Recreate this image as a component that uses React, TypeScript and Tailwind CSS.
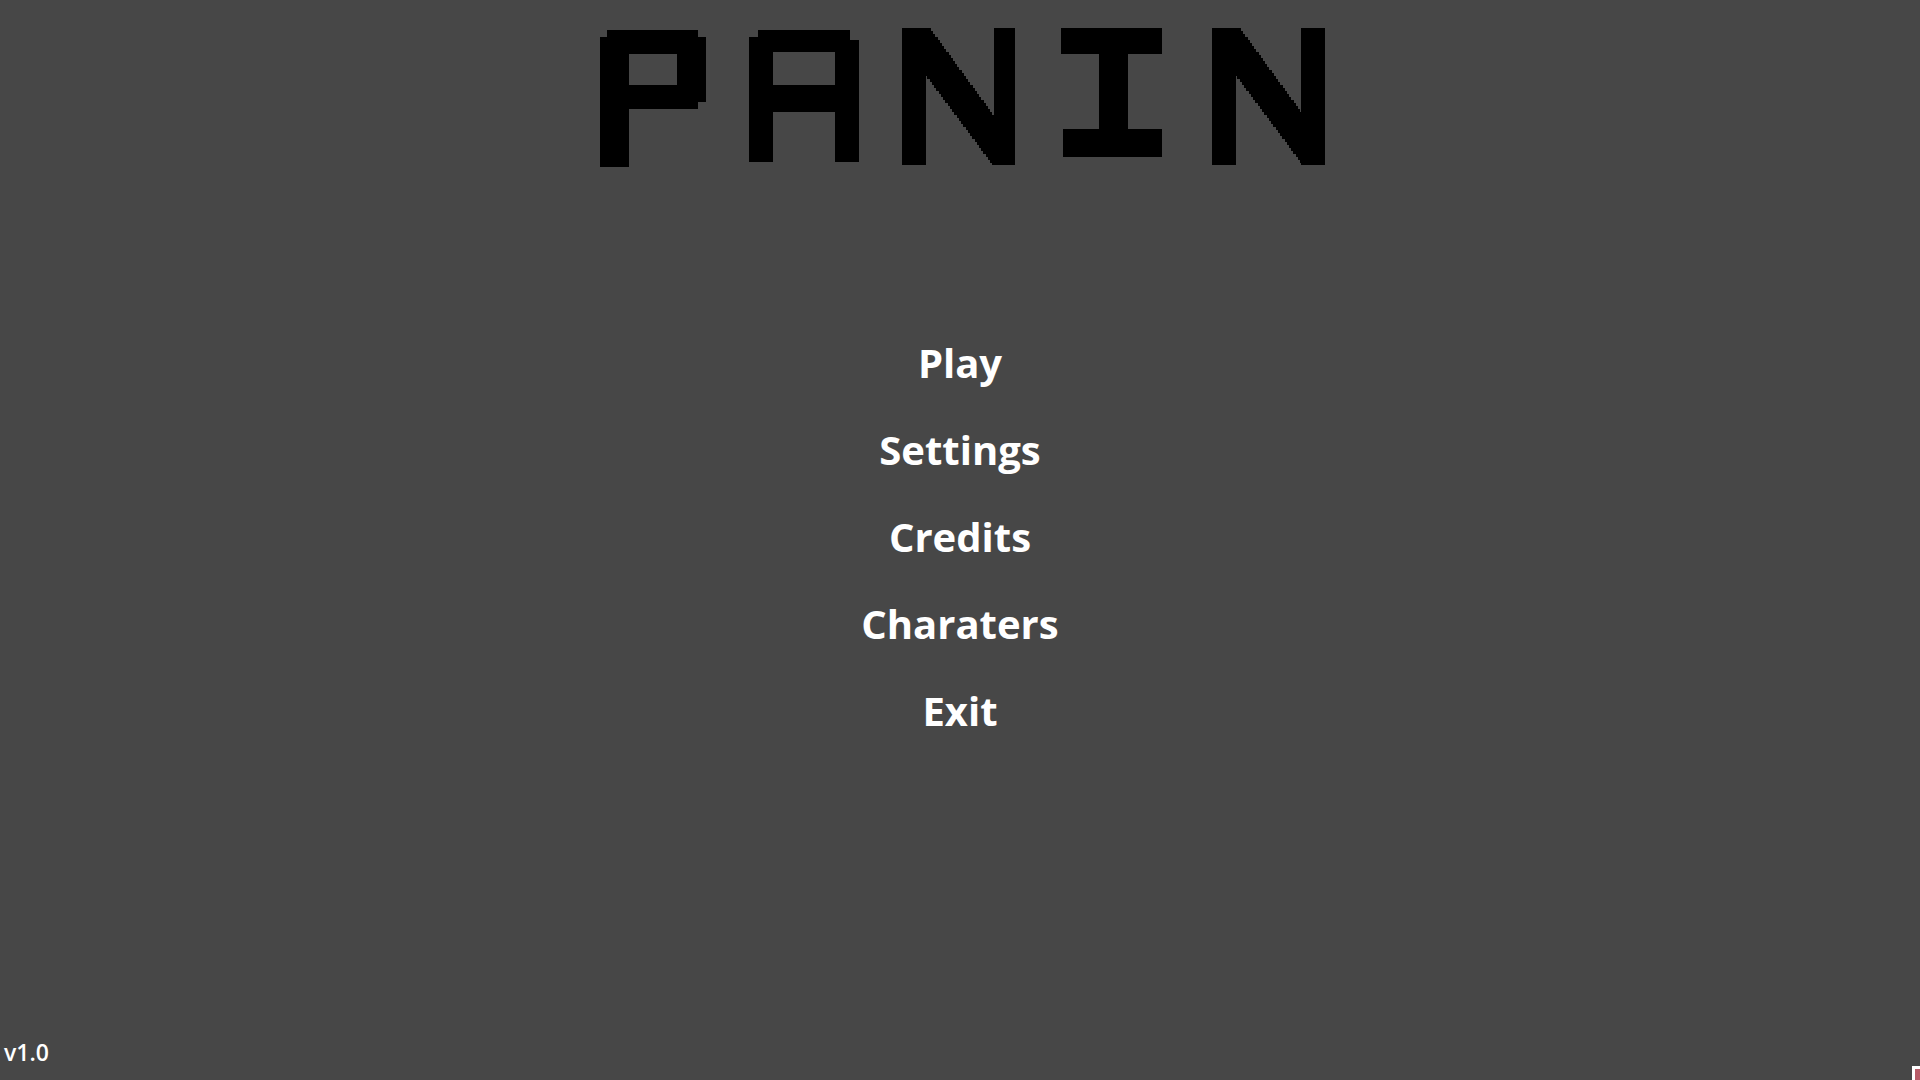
const menu = ["Play", "Settings", "Credits", "Charaters", "Exit"];

// stepped diagonal used by both N shapes of the logo
function Diagonal({ x }: { x: number }) {
    const rows = Array.from({ length: 46 }, (_, i) => i * 3);
    return <>
        {rows.map((y) => {
            const left = Math.max(0, Math.round(24 + (y - 46) / 1.34));
            const right = Math.min(100, Math.round(29 + y / 1.37));
            return <rect key={y} x={x + left} y={y} width={right - left} height={Math.min(3, 137 - y)} />
        })}
    </>
}

function Logo() {
    return <svg role="img" aria-label="PANIN" viewBox="0 0 730 139" className="w-[730px] max-w-full" shapeRendering="crispEdges" fill="black">
        <rect x="5" y="9" width="29" height="130" />
        <rect x="12" y="2" width="91" height="24" />
        <rect x="82" y="9" width="29" height="65" />
        <rect x="12" y="57" width="91" height="24" />

        <rect x="154" y="9" width="24" height="125" />
        <rect x="163" y="2" width="92" height="22" />
        <rect x="240" y="12" width="24" height="122" />
        <rect x="170" y="57" width="80" height="27" />

        <rect x="307" y="0" width="24" height="137" />
        <Diagonal x={307} />
        <rect x="399" y="0" width="21" height="137" />

        <rect x="466" y="0" width="101" height="26" />
        <rect x="504" y="20" width="29" height="85" />
        <rect x="468" y="101" width="99" height="28" />

        <rect x="617" y="0" width="24" height="137" />
        <Diagonal x={617} />
        <rect x="706" y="0" width="24" height="137" />
    </svg>
}

export default function App() {
    return <div className="flex min-h-screen flex-col overflow-hidden bg-[#474747] pt-7 font-['Open_Sans',sans-serif] text-white">
        <h1 className="flex justify-center"><Logo /></h1>

        <nav className="mt-43 flex flex-col items-center gap-[39px]">
            {menu.map((item) => (
                <button key={item} className="cursor-pointer text-[40px] leading-12 font-bold">{item}</button>
            ))}
        </nav>

        <footer className="mt-auto flex items-end justify-between">
            <p className="pb-[14px] pl-1 text-[23px] leading-7 font-semibold">v1.0</p>
            <div className="h-[14px] w-2 border-t-3 border-l-3 border-white bg-[#b85c68]"></div>
        </footer>
    </div>
}
